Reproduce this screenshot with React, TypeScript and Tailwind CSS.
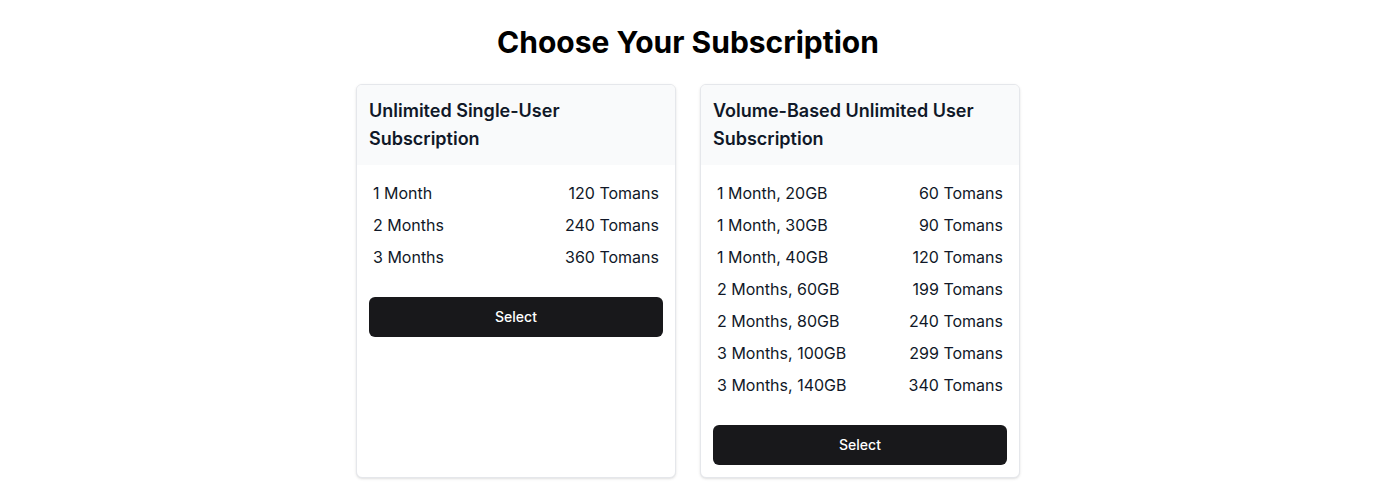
import React from 'react';

interface Plan {
  title: string;
  options: { label: string; price: string }[];
}

const plans: Plan[] = [
  {
    title: 'Unlimited Single-User Subscription',
    options: [
      { label: '1 Month', price: '120 Tomans' },
      { label: '2 Months', price: '240 Tomans' },
      { label: '3 Months', price: '360 Tomans' },
    ],
  },
  {
    title: 'Volume-Based Unlimited User Subscription',
    options: [
      { label: '1 Month, 20GB', price: '60 Tomans' },
      { label: '1 Month, 30GB', price: '90 Tomans' },
      { label: '1 Month, 40GB', price: '120 Tomans' },
      { label: '2 Months, 60GB', price: '199 Tomans' },
      { label: '2 Months, 80GB', price: '240 Tomans' },
      { label: '3 Months, 100GB', price: '299 Tomans' },
      { label: '3 Months, 140GB', price: '340 Tomans' },
    ],
  },
];

const PlanCard: React.FC<{ plan: Plan }> = ({ plan }) => (
  <div className="flex flex-col rounded-md border border-gray-200 bg-white shadow-sm overflow-hidden">
    <div className="bg-gray-50 p-3">
      <h2 className="text-lg font-semibold leading-7 text-gray-900">{plan.title}</h2>
    </div>
    <div className="p-3">
      <div>
        {plan.options.map((o) => (
          <div key={o.label} className="flex justify-between px-1 py-1 text-base leading-6 text-gray-900">
            <span>{o.label}</span>
            <span>{o.price}</span>
          </div>
        ))}
      </div>
      <button className="mt-6 h-10 w-full rounded-md bg-[#18181b] text-sm font-medium text-white">
        Select
      </button>
    </div>
  </div>
);

export default function App() {
  return (
    <div className="min-h-screen bg-white pt-6 font-['Inter','Liberation_Sans',sans-serif]">
      <h1 className="text-center text-3xl font-bold leading-9 text-black">Choose Your Subscription</h1>
      <div className="mx-auto mt-6 grid w-[664px] grid-cols-2 gap-6">
        {plans.map((p) => (
          <PlanCard key={p.title} plan={p} />
        ))}
      </div>
    </div>
  );
}
